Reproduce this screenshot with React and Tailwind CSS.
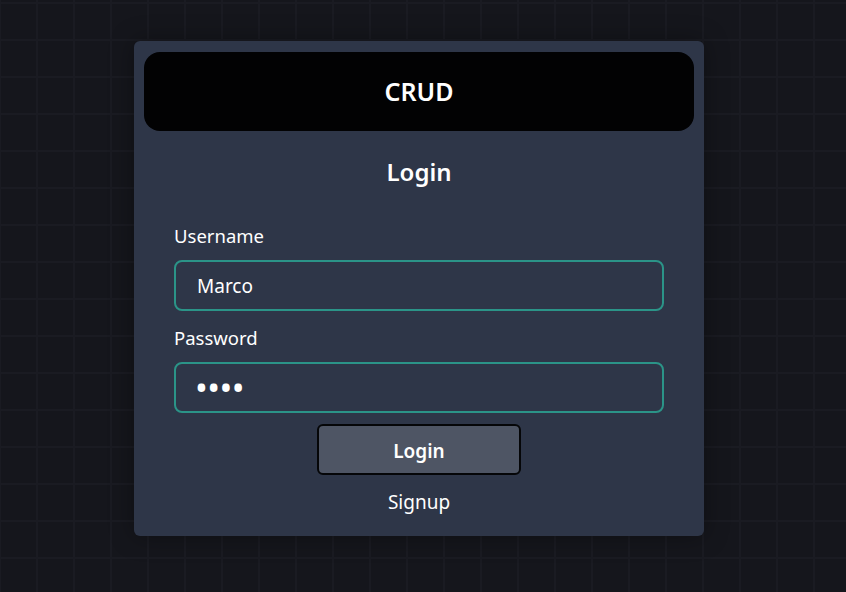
export default function App() {
  return (
    <div
      className="min-h-screen w-full bg-[#15161c] bg-[linear-gradient(to_right,#1a1b22_2px,transparent_2px),linear-gradient(to_bottom,#1a1b22_2px,transparent_2px)] bg-[size:37px_37px] bg-[position:-1px_2px] pt-[41px] pl-[134px]"
      style={{ fontFamily: '"Noto Sans", "Open Sans", sans-serif' }}
    >
      <div className="w-[570px] h-[495px] rounded-[6px] bg-[#2e3648] pt-[11px] px-[10px] pb-[10px] flex flex-col shadow-[0_0_24px_rgba(0,0,0,0.35)]">
        <div className="h-[79px] shrink-0 rounded-[16px] bg-[#020203] flex items-center justify-center text-white text-[25px] font-semibold">
          CRUD
        </div>
        <h2 className="mt-[26px] text-center text-white text-[24px] leading-[30px] font-semibold">
          Login
        </h2>
        <form className="mt-[37px] px-[30px] flex flex-col">
          <label className="text-white text-[18.5px] leading-[24px]">Username</label>
          <input
            type="text"
            defaultValue="Marco"
            className="mt-[12px] h-[51px] w-full rounded-[8px] border-2 border-[#2b9488] bg-[#2e3648] pl-[21px] pt-[1px] text-white text-[19px] outline-none"
          />
          <label className="mt-[15px] text-white text-[18.5px] leading-[24px]">Password</label>
          <input
            type="password"
            defaultValue="1234"
            className="mt-[12px] h-[51px] w-full rounded-[8px] border-2 border-[#2b9488] bg-[#2e3648] pl-[19px] text-white text-[34px] tracking-[-0.5px] outline-none"
          />
          <button
            type="button"
            className="mt-[11px] mx-auto w-[204px] h-[51px] rounded-[6px] border-2 border-[#050608] bg-[#4e5564] pt-[3px] text-white text-[19px] font-semibold"
          >
            Login
          </button>
          <div className="mt-[15px] text-center text-white text-[19px] leading-[24px]">
            Signup
          </div>
        </form>
      </div>
    </div>
  );
}
